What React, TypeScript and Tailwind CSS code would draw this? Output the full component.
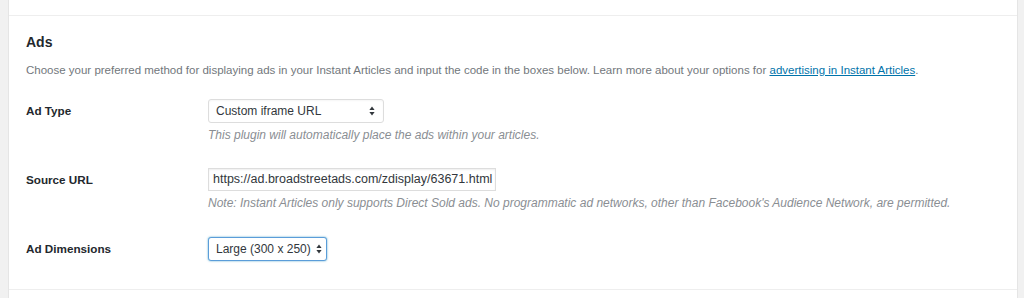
import React from "react";

const font = { fontFamily: '"Liberation Sans", Arial, sans-serif' };

function Arrows() {
  return (
    <svg width="6" height="10" viewBox="0 0 6 10" className="shrink-0">
      <path d="M3 0.5 L5.6 4 H0.4 Z" fill="#32373c" />
      <path d="M3 9.5 L5.6 6 H0.4 Z" fill="#32373c" />
    </svg>
  );
}

function Row({ label, children, hint }: { label: string; children: React.ReactNode; hint?: string }) {
  return (
    <div className="flex">
      <div className="w-[182px] shrink-0 text-[11.7px] font-bold text-[#23282d] flex items-start">
        <div className="h-[24px] flex items-center">{label}</div>
      </div>
      <div className="flex flex-col">
        {children}
        {hint && <div className="mt-[5px] text-[12px] italic text-[#8a8e93] leading-[14px]">{hint}</div>}
      </div>
    </div>
  );
}

export default function App() {
  return (
    <div className="w-[1024px] h-[298px] bg-[#f1f1f1] flex overflow-hidden" style={font}>
      <div className="ml-[8px] w-[1010px] h-full bg-white border-x border-[#e5e5e5] flex flex-col">
        <div className="h-[16px] border-b border-[#eeeeee] shrink-0" />
        <div className="h-[273px] pl-[17px] pt-[18px] shrink-0">
          <h2 className="text-[14px] font-bold text-[#23282d] leading-[16px]">Ads</h2>
          <p className="mt-[13px] text-[11.5px] text-[#72777c] leading-[14px]">
            Choose your preferred method for displaying ads in your Instant Articles and input the code in the boxes below. Learn more about your options for{" "}
            <a className="text-[#0073aa] underline">advertising in Instant Articles</a>.
          </p>
          <div className="mt-[22px] flex flex-col">
            <Row label="Ad Type" hint="This plugin will automatically place the ads within your articles.">
              <div className="w-[176px] h-[24px] border border-[#dddddd] rounded-[3px] bg-white flex items-center justify-between pl-[7px] pr-[8px] text-[12px] text-[#32373c] shadow-[inset_0_1px_2px_rgba(0,0,0,0.04)]">
                <span>Custom iframe URL</span>
                <Arrows />
              </div>
            </Row>
            <div className="h-[26px]" />
            <Row label="Source URL" hint="Note: Instant Articles only supports Direct Sold ads. No programmatic ad networks, other than Facebook's Audience Network, are permitted.">
              <div className="w-[288px] h-[23px] border border-[#dddddd] bg-white flex items-center pl-[4px] text-[12.5px] text-[#32373c] shadow-[inset_0_1px_2px_rgba(0,0,0,0.07)]">
                https://ad.broadstreetads.com/zdisplay/63671.html
              </div>
            </Row>
            <div className="h-[27px]" />
            <Row label="Ad Dimensions">
              <div className="w-[119px] h-[24px] border border-[#5b9dd9] rounded-[3px] bg-white flex items-center justify-between pl-[7px] pr-[4px] text-[12px] text-[#32373c] shadow-[0_0_2px_rgba(30,140,190,0.8)]">
                <span>Large (300 x 250)</span>
                <Arrows />
              </div>
            </Row>
          </div>
        </div>
        <div className="border-t border-[#eeeeee] flex-1" />
      </div>
    </div>
  );
}
